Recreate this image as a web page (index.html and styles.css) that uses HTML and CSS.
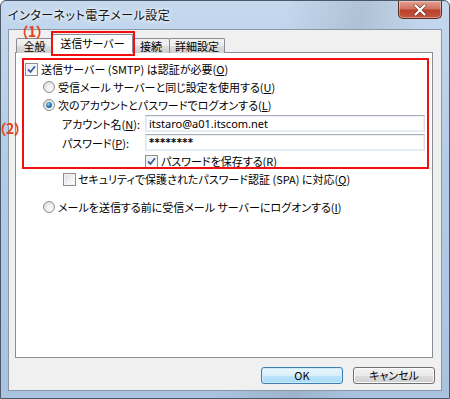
FILE: index.html
```html
<!DOCTYPE html>
<html lang="ja">
<head>
<meta charset="utf-8">
<title>インターネット電子メール設定</title>
<link rel="stylesheet" href="styles.css">
</head>
<body>
<div class="window">
  <div class="titlebar">
    <span class="title">インターネット電子メール設定</span>
    <div class="close">
      <svg width="14" height="12" viewBox="0 0 14 12"><path d="M2.5 1.5 L11.5 10.5 M11.5 1.5 L2.5 10.5" stroke="#3a1a14" stroke-width="3.6" stroke-linecap="round" opacity="0.55"/><path d="M2.5 1.5 L11.5 10.5 M11.5 1.5 L2.5 10.5" stroke="#ffffff" stroke-width="2.2" stroke-linecap="round"/></svg>
    </div>
  </div>
  <div class="client">
    <div class="tabs">
      <div class="tab t1">全般</div>
      <div class="tab t2 active">送信サーバー</div>
      <div class="tab t3">接続</div>
      <div class="tab t4">詳細設定</div>
    </div>
    <div class="panel">
      <div class="row r1"><span class="cb on"><svg width="11" height="11" viewBox="0 0 11 11"><path d="M2 5.5 L4.5 8 L9 2.2" fill="none" stroke="#3c5c9e" stroke-width="1.8"/></svg></span><span>送信サーバー (SMTP) は認証が必要(<u>O</u>)</span></div>
      <div class="row ind"><span class="rb"></span><span>受信メール サーバーと同じ設定を使用する(<u>U</u>)</span></div>
      <div class="row ind"><span class="rb on"></span><span>次のアカウントとパスワードでログオンする(<u>L</u>)</span></div>
      <div class="row field"><span class="lbl">アカウント名(<u>N</u>):</span><div class="input">itstaro@a01.itscom.net</div></div>
      <div class="row field"><span class="lbl">パスワード(<u>P</u>):</span><div class="input pw">********</div></div>
      <div class="row save"><span class="cb on"><svg width="11" height="11" viewBox="0 0 11 11"><path d="M2 5.5 L4.5 8 L9 2.2" fill="none" stroke="#3c5c9e" stroke-width="1.8"/></svg></span><span>パスワードを保存する(<u>R</u>)</span></div>
      <div class="row spa"><span class="cb"></span><span>セキュリティで保護されたパスワード認証 (SPA) に対応(<u>Q</u>)</span></div>
      <div class="row ind last"><span class="rb"></span><span>メールを送信する前に受信メール サーバーにログオンする(<u>I</u>)</span></div>
    </div>
    <div class="buttons">
      <div class="btn default">OK</div>
      <div class="btn">キャンセル</div>
    </div>
  </div>
  <div class="mark box1"></div>
  <div class="mark box2"></div>
  <div class="mark lbl1">（1）</div>
  <div class="mark lbl2">（2）</div>
</div>
</body>
</html>
```
FILE: styles.css
```css
html, body {
  margin: 0;
  padding: 0;
}
body {
  width: 450px;
  height: 399px;
  overflow: hidden;
  font-family: "Noto Sans CJK JP", "Noto Sans", sans-serif;
  font-size: 11px;
  color: #000;
  background: #fff;
}
.window {
  position: relative;
  width: 450px;
  height: 399px;
  box-sizing: border-box;
  border: 1px solid #4a5868;
  border-radius: 6px 6px 0 0;
  padding: 0 7px 7px 7px;
  display: flex;
  flex-direction: column;
  background:
    linear-gradient(100deg, rgba(255,255,255,0) 55%, rgba(120,130,140,0.25) 70%, rgba(255,255,255,0) 82%),
    linear-gradient(180deg, #c4d8ee 0%, #b3cce6 40%, #a9c3df 100%);
}
.titlebar {
  height: 28px;
  display: flex;
  align-items: flex-start;
}
.title {
  font-size: 12px;
  line-height: 14px;
  margin-top: 7px;
  color: #111;
  text-shadow: 0 0 6px #fff, 0 0 3px #fff;
  font-feature-settings: "palt";
  letter-spacing: 0.5px;
}
.close {
  margin-left: auto;
  width: 44px;
  height: 18px;
  box-sizing: border-box;
  border: 1px solid #5d2a24;
  border-top: none;
  border-radius: 0 0 5px 5px;
  background: linear-gradient(180deg, #e4a394 0%, #d0725f 45%, #b8402c 55%, #c6573f 100%);
  display: flex;
  align-items: center;
  justify-content: center;
  box-shadow: inset 0 0 0 1px rgba(255,255,255,0.35);
}
.client {
  flex: 1;
  display: flex;
  flex-direction: column;
  background: #f0f0f0;
  border: 1px solid #8997a6;
}
.tabs {
  display: flex;
  align-items: flex-end;
  padding: 4px 0 0 7px;
  height: 19px;
  margin-bottom: -1px;
  position: relative;
  z-index: 1;
}
.tab {
  box-sizing: border-box;
  height: 15px;
  line-height: 14px;
  text-align: center;
  border: 1px solid #898c95;
  border-bottom: none;
  background: linear-gradient(180deg, #f2f2f2 0%, #ebebeb 50%, #dddddd 50%, #cfcfcf 100%);
  border-radius: 2px 2px 0 0;
  font-feature-settings: "palt";
  margin-right: -1px;
}
.t1 { width: 37px; }
.t2 { width: 81px; }
.t3 { width: 38px; }
.t4 { width: 56px; }
.tab.active {
  height: 19px;
  background: #fff;
  line-height: 16px;
  position: relative;
  z-index: 2;
}
.panel {
  flex: 1;
  margin: 0 8px 0 6px;
  background: #fff;
  border: 1px solid #898c95;
  padding: 7px 0 0 9px;
  font-feature-settings: "palt";
}
.row {
  display: flex;
  align-items: center;
  height: 18px;
  white-space: nowrap;
}
.row.field { height: 19px; }
.ind { padding-left: 18px; }
.r1 .cb { margin-right: 3px; }
.ind .rb { margin-right: 3px; }
.field { padding-left: 37px; }
.lbl { width: 83px; }
.input {
  box-sizing: border-box;
  width: 280px;
  height: 17px;
  border: 1px solid #abadb3;
  border-color: #abadb3 #dbdfe6 #e3e9ef #e2e3ea;
  box-shadow: inset 0 0 0 1px #e8f0f8;
  font-family: "Noto Sans", sans-serif;
  font-size: 11px;
  line-height: 15px;
  padding-left: 3px;
  background: #fff;
}
.input.pw {
  font-family: "DejaVu Sans", sans-serif;
  font-weight: bold;
  font-size: 10px;
  letter-spacing: 0.3px;
}
.save { padding-left: 120px; }
.save .cb { margin-right: 3px; }
.spa { padding-left: 38px; }
.spa .cb { margin-right: 2px; }
.last { margin-top: 10px; }
.cb {
  width: 13px;
  height: 13px;
  box-sizing: border-box;
  border: 1px solid #8e8f8f;
  background: linear-gradient(135deg, #dcdcdc 0%, #f4f4f4 60%, #ffffff 100%);
  box-shadow: inset 0 0 0 1px #f4f4f4;
  display: flex;
  align-items: center;
  justify-content: center;
  flex: none;
}
.cb.on {
  background: linear-gradient(135deg, #e2e9f3 0%, #f6f8fb 60%, #ffffff 100%);
}
.cb svg { display: block; }
.rb {
  width: 12px;
  height: 12px;
  box-sizing: border-box;
  border: 1px solid #8e8f8f;
  border-radius: 50%;
  background: radial-gradient(circle at 65% 65%, #fdfdfd 0%, #e5e5e5 60%, #d2d2d2 100%);
  flex: none;
  position: relative;
}
.rb.on::after {
  content: "";
  position: absolute;
  left: 2px;
  top: 2px;
  width: 6px;
  height: 6px;
  border-radius: 50%;
  background: radial-gradient(circle at 40% 35%, #9fd5f7 0%, #2a7cc0 45%, #123f73 100%);
}
u {
  text-decoration: underline;
  text-underline-offset: 1px;
}
.buttons {
  display: flex;
  justify-content: flex-end;
  gap: 10px;
  padding: 9px 6px 6px 0;
}
.btn {
  box-sizing: border-box;
  width: 82px;
  height: 17px;
  border: 1px solid #707070;
  border-radius: 3px;
  background: linear-gradient(180deg, #f2f2f2 0%, #ebebeb 50%, #dddddd 50%, #cfcfcf 100%);
  box-shadow: inset 0 0 0 1px #fcfcfc;
  text-align: center;
  line-height: 15px;
  font-size: 11px;
  font-feature-settings: "palt";
}
.btn.default {
  border-color: #3c7fb1;
  background: linear-gradient(180deg, #eaf6fd 0%, #d9f0fc 50%, #bee6fd 50%, #a7d9f5 100%);
  box-shadow: inset 0 0 0 1px #cfeafc;
}
.mark {
  position: absolute;
}
.box1 {
  left: 50px;
  top: 30px;
  width: 84px;
  height: 25px;
  box-sizing: border-box;
  border: 2px solid #f01010;
  z-index: 5;
}
.box2 {
  left: 21px;
  top: 57px;
  width: 407px;
  height: 111px;
  box-sizing: border-box;
  border: 2px solid #f01010;
  z-index: 5;
}
.lbl1, .lbl2 {
  color: #e8401c;
  font-weight: bold;
  font-size: 14px;
  line-height: 11px;
  font-feature-settings: "palt";
  z-index: 6;
}
.lbl1 { left: 20px; top: 25px; }
.lbl2 { left: -2px; top: 122px; }
```
